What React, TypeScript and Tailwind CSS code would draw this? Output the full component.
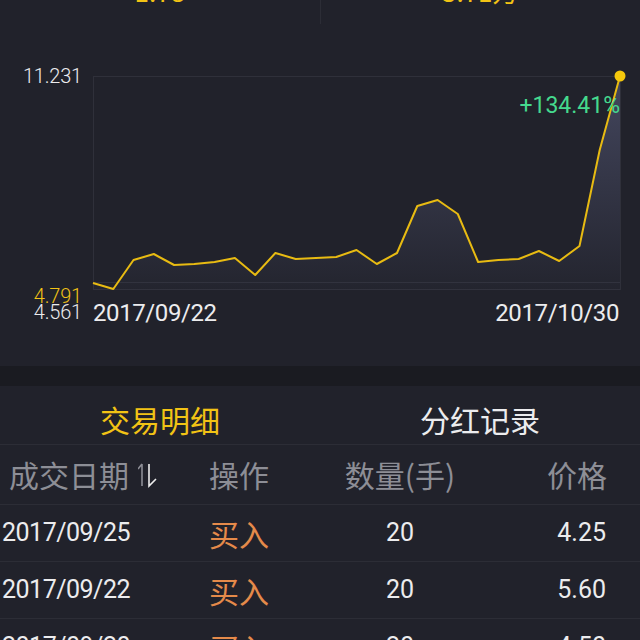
import { useState } from 'react';

const prices = [
  283, 289, 260, 254, 265, 264, 262, 258, 275, 253, 259, 258, 257, 250, 264, 253,
  206, 200, 214, 262, 260, 259, 251, 261, 246, 150, 76,
];

const trades = [
  { date: '2017/09/25', side: '买入', qty: 20, price: '4.25' },
  { date: '2017/09/22', side: '买入', qty: 20, price: '5.60' },
  { date: '2017/09/20', side: '买入', qty: 20, price: '4.50' },
];

const cjk = "font-['Noto_Sans_CJK_SC','Noto_Sans',sans-serif]";

function Chart() {
  const step = 527 / (prices.length - 1);
  const pts = prices.map((y, i) => [i * step, y - 76]);
  const line = pts.map(([x, y]) => `${x.toFixed(1)},${y}`).join(' ');
  const area = `M0,214 L${line.replace(/ /g, ' L')} L527,214 Z`;

  return (
    <div className="relative w-[529px]">
      <svg width="529" height="214" className="block overflow-visible">
        <defs>
          <linearGradient id="fill" x1="0" y1="0" x2="0" y2="214" gradientUnits="userSpaceOnUse">
            <stop offset="0" stopColor="#5b5f80" stopOpacity="0.6" />
            <stop offset="1" stopColor="#5b5f80" stopOpacity="0.04" />
          </linearGradient>
        </defs>
        <rect x="0.5" y="0.5" width="527" height="213" fill="none" stroke="#2f303a" />
        <line x1="0.5" y1="206.5" x2="527.5" y2="206.5" stroke="#2f303a" />
        <path d={area} fill="url(#fill)" />
        <polyline points={line} fill="none" stroke="#e8bb12" strokeWidth="2" strokeLinejoin="round" />
        <circle cx="527" cy="0" r="5.5" fill="#f5c80c" />
      </svg>
      <div className="absolute right-[2px] top-[18px] text-[23px] leading-[24px] text-[#45d98e]">
        +134.41%
      </div>
      <div className="mt-[11px] flex justify-between pr-[3px] text-[24px] leading-[24px] tracking-[-0.4px] text-[#ececee]">
        <span>2017/09/22</span>
        <span>2017/10/30</span>
      </div>
    </div>
  );
}

function SortIcon() {
  return (
    <svg width="20" height="26" viewBox="0 0 20 26" className="ml-[9px]">
      <path d="M4 2 V24 M4 2 L0 7" stroke="#8d8e96" strokeWidth="1.6" fill="none" />
      <path d="M11 2 V24 L18 17" stroke="#eeeeee" strokeWidth="1.6" fill="none" />
    </svg>
  );
}

export default function App() {
  const [tab, setTab] = useState(0);

  return (
    <div className="h-[640px] w-[640px] overflow-hidden bg-[#21222b] font-['Roboto',sans-serif]">
      <div className="flex h-[26px] overflow-hidden">
        <div className="flex h-[24px] flex-1 justify-center border-r border-[#2c2d36]">
          <div className={`-mt-[24px] text-[26px] leading-[30px] text-[#f2c315] ${cjk}`}>1.78</div>
        </div>
        <div className="flex flex-1 justify-center">
          <div className={`-mt-[24px] text-[26px] leading-[30px] text-[#f2c315] ${cjk}`}>3.71万</div>
        </div>
      </div>

      <div className="flex h-[340px] items-start pt-[50px]">
        <div className="flex w-[93px] flex-col pr-[11px] text-right text-[20px] font-light tracking-[-0.2px]">
          <div className="flex h-[212px] flex-col">
            <div className="-mt-[10px] leading-[20px] text-[#ececee]">11.231</div>
          </div>
          <div className="leading-[16px] text-[#f2c315]">4.791</div>
          <div className="leading-[16px] text-[#ececee]">4.561</div>
        </div>
        <Chart />
      </div>

      <div className="h-[20px] bg-[#1a1b21]" />

      <div className={`flex h-[59px] border-b border-[#2c2d36] pt-[8px] text-[30px] ${cjk}`}>
        {['交易明细', '分红记录'].map((t, i) => (
          <button
            key={t}
            onClick={() => setTab(i)}
            className={`flex flex-1 items-center justify-center ${tab === i ? 'text-[#f2c315]' : 'text-[#ececee]'}`}
          >
            {t}
          </button>
        ))}
      </div>

      <div className={`flex h-[60px] items-center border-b border-[#2c2d36] text-[30px] text-[#8d8e96] ${cjk}`}>
        <div className="flex w-[209px] items-center pl-[9px]">
          成交日期
          <SortIcon />
        </div>
        <div className="w-[111px]">操作</div>
        <div className="w-[160px] text-center">数量(手)</div>
        <div className="flex-1 pr-[33px] text-right">价格</div>
      </div>

      {trades.map((r) => (
        <div key={r.date} className="flex h-[57px] items-center border-b border-[#2c2d36] text-[25px] text-[#ececee]">
          <div className="w-[209px] pl-[2px] tracking-[-0.5px]">{r.date}</div>
          <div className={`w-[111px] text-[30px] text-[#e58a4a] ${cjk}`}>{r.side}</div>
          <div className="w-[160px] text-center">{r.qty}</div>
          <div className="flex-1 pr-[34px] text-right">{r.price}</div>
        </div>
      ))}
    </div>
  );
}
